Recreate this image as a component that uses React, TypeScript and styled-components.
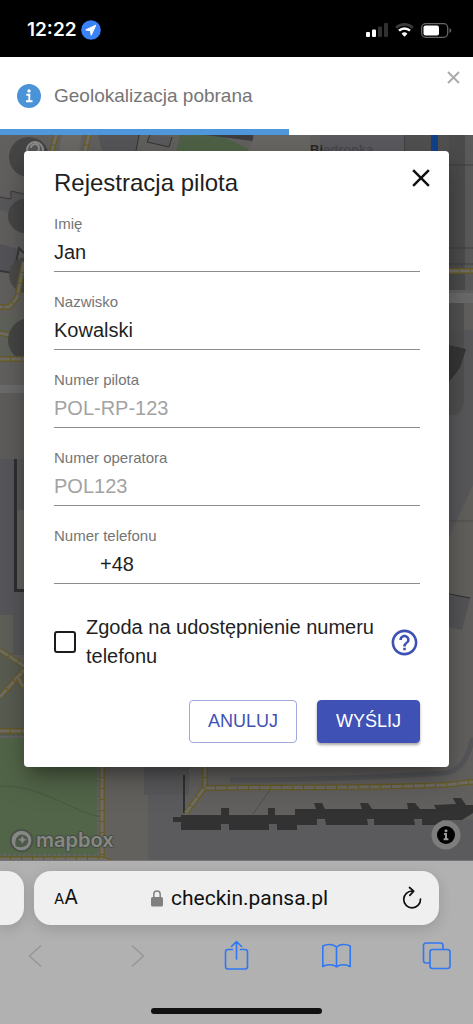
import React from "react";
import styled, { createGlobalStyle } from "styled-components";
import { MdHelpOutline, MdClose } from "react-icons/md";

const sans = `"Liberation Sans", Arial, sans-serif`;
const system = `Inter, "Liberation Sans", sans-serif`;
const indigo = "#3f51b5";

const GlobalStyle = createGlobalStyle`
  *, *::before, *::after { box-sizing: border-box; }
  body { margin: 0; background: #b1b1b1; font-family: ${sans}; color: #1f1f1f; }
  button, input { font: inherit; color: inherit; margin: 0; }
  button { padding: 0; border: 0; background: none; cursor: pointer; }
  svg { display: block; }
`;

const Page = styled.div`
  display: flex;
  flex-direction: column;
  min-height: 100vh;
`;

const StatusBar = styled.header`
  display: flex;
  align-items: center;
  justify-content: space-between;
  height: 57px;
  padding: 3px 21px 0 27px;
  background: #000;
  color: #fff;
`;

const StatusGroup = styled.div<{ $gap: number }>`
  display: flex;
  align-items: center;
  gap: ${(p) => p.$gap}px;
`;

const Time = styled.span`
  font: 600 19px/24px ${system};
`;

const Toast = styled.section`
  display: flex;
  flex-direction: column;
  height: 78px;
  background: #fff;
`;

const ToastBody = styled.div`
  display: flex;
  flex: 1;
  align-items: center;
  gap: 13px;
  padding: 6px 13px 0 17px;
  color: #757575;
`;

const ToastText = styled.p`
  flex: 1;
  margin: 0;
  font-size: 19px;
  line-height: 24px;
`;

const ToastClose = styled.button`
  align-self: flex-start;
  padding-top: 8px;
  color: #ababab;
`;

const Progress = styled.div`
  width: 61%;
  height: 6px;
  background: #4f97da;
`;

const Stage = styled.main`
  position: relative;
  flex: 1;
  padding: 16px 24px 94px;
  overflow: hidden;
  background: #626160;
`;

const MapCanvas = styled.svg`
  position: absolute;
  inset: 0;
  width: 100%;
  height: 100%;
`;

const MapLogo = styled.a`
  position: absolute;
  left: 9px;
  bottom: 7px;
  display: flex;
  align-items: center;
  gap: 2px;
  color: #868884;
  text-decoration: none;
  font: 600 20px/28px ${system};
  text-shadow: 1px 0 1px #444b42, -1px 0 1px #444b42, 0 1px 1px #444b42, 0 -1px 1px #444b42;
`;

const MapInfo = styled.button`
  position: absolute;
  right: 12px;
  bottom: 11px;
`;

const Dialog = styled.form`
  position: relative;
  padding: 16px 29px 24px 30px;
  border-radius: 4px;
  background: #fff;
  box-shadow: 0 11px 15px -7px rgba(0, 0, 0, 0.3), 0 12px 32px rgba(0, 0, 0, 0.25);
`;

const DialogHeader = styled.div`
  display: flex;
  justify-content: space-between;
  align-items: flex-start;
  height: 32px;
  margin-bottom: 16px;
`;

const Title = styled.h1`
  margin: 0;
  font-size: 24px;
  font-weight: 400;
  line-height: 32px;
`;

const DialogClose = styled.button`
  margin: -4px -16px 0 0;
  color: #111;
`;

const Fields = styled.div`
  display: grid;
  gap: 21px;
`;

const Field = styled.div`
  display: grid;
  gap: 3px;
`;

const Label = styled.label`
  font-size: 15px;
  line-height: 18px;
  color: #757575;
`;

const TextInput = styled.input<{ $indent?: boolean }>`
  width: 100%;
  height: 36px;
  padding: 0 0 2px ${(p) => (p.$indent ? 46 : 0)}px;
  border: 0;
  border-bottom: 1px solid #8c8c8c;
  border-radius: 0;
  background: none;
  font-size: 20px;
  outline: none;
  &::placeholder { color: #a3a3a3; opacity: 1; }
`;

const Consent = styled.div`
  display: flex;
  align-items: center;
  margin: 29px 0;
`;

const Checkbox = styled.input`
  appearance: none;
  flex: none;
  width: 22px;
  height: 22px;
  margin-right: 10px;
  border: 2px solid #1c1c1c;
  border-radius: 3px;
  &:checked { background: ${indigo}; }
`;

const ConsentLabel = styled.label`
  flex: 1;
  font-size: 20px;
  line-height: 29px;
`;

const HelpButton = styled.button`
  flex: none;
  color: ${indigo};
`;

const Actions = styled.div`
  display: flex;
  justify-content: flex-end;
  gap: 20px;
`;

const ActionButton = styled.button<{ $primary?: boolean }>`
  height: 43px;
  min-width: 103px;
  padding: 0 18px;
  border: 1px solid ${(p) => (p.$primary ? indigo : "#9fa8da")};
  border-radius: 4px;
  background: ${(p) => (p.$primary ? indigo : "#fff")};
  color: ${(p) => (p.$primary ? "#fff" : indigo)};
  font-size: 18px;
  box-shadow: ${(p) => (p.$primary ? "0 2px 3px rgba(0, 0, 0, 0.35)" : "none")};
`;

const BrowserBar = styled.footer`
  background: #b1b1b1;
  padding-top: 10px;
`;

const AddressRow = styled.div`
  display: flex;
  gap: 10px;
  height: 54px;
  padding-right: 34px;
`;

const NeighbourTab = styled.div`
  width: 24px;
  border-radius: 0 17px 17px 0;
  background: #efefef;
  box-shadow: 0 4px 14px rgba(0, 0, 0, 0.14);
`;

const AddressBar = styled.div`
  display: flex;
  flex: 1;
  align-items: center;
  justify-content: space-between;
  padding: 0 15px 0 19px;
  border-radius: 17px;
  background: #efefef;
  color: #111;
  box-shadow: 0 4px 14px rgba(0, 0, 0, 0.14);
`;

const TextSizeButton = styled.button`
  width: 26px;
  font: 400 20px/24px ${system};
  white-space: nowrap;
`;

const SmallLetter = styled.span`
  font-size: 15px;
`;

const Address = styled.a`
  display: flex;
  align-items: center;
  gap: 8px;
  color: inherit;
  text-decoration: none;
  font: 400 21px/24px Roboto, ${system};
`;

const Toolbar = styled.nav`
  display: flex;
  align-items: center;
  justify-content: space-between;
  height: 62px;
  padding: 0 20px 0 19px;
`;

const ToolButton = styled.button<{ $muted?: boolean }>`
  color: ${(p) => (p.$muted ? "#969696" : "#2f77f3")};
`;

const HomeArea = styled.div`
  display: flex;
  justify-content: center;
  padding: 21px 0 10px;
`;

const HomeIndicator = styled.div`
  width: 36%;
  height: 6px;
  border-radius: 3px;
  background: #111;
`;

const Footpath = ({ d }: { d: string }) => (
  <g fill="none">
    <path d={d} stroke="#665b20" strokeWidth="5.500" />
    <path d={d} stroke="#6f6c67" strokeWidth="3.200" strokeDasharray="10 1" />
  </g>
);

const CityMap = () => (
  <MapCanvas viewBox="0 135 473 726" preserveAspectRatio="xMidYMin slice" aria-hidden="true">
    <rect y="135" width="473" height="726" fill="#62605e" />

    <path d="M98 135h42l-4 16h-34z" fill="#555558" />
    <path d="M139 135l-3 16" stroke="#333" />
    <path d="M150 135l-3 7 22 5 3-10" fill="#5a5a5c" stroke="#333" />
    <path d="M180 135h40l32 16h-76z" fill="#4e6146" />
    <path d="M205 135h48v6z" fill="#3d3d3f" />
    <path d="M255 135h55v16h-62z" fill="#686662" />
    <path d="M320 135h84v16h-84z" fill="#5a5a5e" />
    <text x="310" y="154" fontFamily="Liberation Sans" fontSize="13" fontWeight="700" fill="#2c2725">
      Bi<tspan fill="#48484b">edronka</tspan>
    </text>
    <path d="M404 135h69v20h-69z" fill="#505051" />
    <path d="M404.500 135v16" stroke="#414142" />
    <path d="M431 135h7v16h-7z" fill="#12418a" />
    <Footpath d="M56 135l-4 16" />
    <Footpath d="M89 135l-4 16" />
    <path d="M62 135h20l-3 16h-20z" fill="#6b6965" />

    <path d="M0 197l11 2v-8l13 3v26H0z" fill="#58585b" />
    <path d="M0 197l11 2v-8l13 3" fill="none" stroke="#3a3a3b" />
    <circle cx="29" cy="157" r="20" fill="#454545" />
    <circle cx="35" cy="150" r="8" fill="#555" stroke="#8b8b8b" strokeWidth="2" />
    <path d="M31 148a4 4 0 1 1 5 4" fill="none" stroke="#8b8b8b" strokeWidth="2" />
    <path d="M0 210l24 5v30H0z" fill="#605f5d" />
    <circle cx="25" cy="216" r="17" fill="#464646" />
    <path d="M0 244l19 5-5 24-14-2z" fill="#545458" />
    <path d="M0 271l14 2 5-25 5 5" fill="none" stroke="#373738" strokeWidth="2" />
    <circle cx="27" cy="275" r="18" fill="#4a4a48" />
    <Footpath d="M24 262l-7 36-8 9H0" />
    <path d="M0 313l24 4v45H0z" fill="#5f625a" />
    <Footpath d="M0 333l24 5" />
    <circle cx="30" cy="340" r="22" fill="#454644" />
    <Footpath d="M0 359h24" />
    <path d="M0 385h24v8H0z" fill="#6b6b6b" />
    <path d="M0 393h24v66H0z" fill="#5e5d5b" />
    <path d="M0 459h24v196H0z" fill="#57575b" />
    <path d="M17 510h7v80h-7z" fill="#65635f" />
    <path d="M15.500 459v131.500H24" fill="none" stroke="#303030" strokeWidth="3" />
    <path d="M0 615h13v38H0z" fill="#5f605a" />
    <path d="M0 650l24 16v70H0z" fill="#585c51" />
    <Footpath d="M0 650l24 16" />
    <Footpath d="M0 697l24-27" />
    <Footpath d="M18 678l6 10" />
    <Footpath d="M0 731h24" />

    <path d="M449 135h16v155h-16z" fill="#4b4b4b" />
    <path d="M465 135h8v155h-8z" fill="#5a5a5a" />
    <path d="M449 165h24M449 248h24M449 264h24" stroke="#3e3e3e" />
    <Footpath d="M449 271h24" />
    <path d="M449 293h24v10h-24z" fill="#6a6a6a" />
    <path d="M449 330h24v260h-24z" fill="#58585b" />
    <path d="M449 303h15v96q0 12-8 16h-7z" fill="#4b4b4c" opacity=".7" />
    <path d="M449 345l17 4-6 19-11 14z" fill="#363637" />
    <path d="M473 485l-24 52v60h24z" fill="#62605d" />
    <path d="M449 521h24" stroke="#4f4e4c" />
    <path d="M449 595l21 3-8 32-13-3z" fill="#545457" />
    <path d="M449 594l21 4" stroke="#2c2c2c" />

    <path d="M0 738h98v123H0z" fill="#526548" />
    <path d="M0 737h24M98 767v88H0" fill="none" stroke="#646264" strokeWidth="2" strokeDasharray="3 2" />
    <path d="M0 786c45 0 65 23 101 31 22 6 36 9 47 8" fill="none" stroke="#435a43" />
    <path d="M105 767h43v94h-43z" fill="#63615e" />
    <Footpath d="M102 767v91" />
    <Footpath d="M0 859h102l12 4" />
    <path d="M144 767h45v28h-45z" fill="#58585a" />
    <path d="M148 795h36v25h289v41H148z" fill="#5b5b5e" />
    <path d="M230 780c80 0 170-4 215-7 20-3 24-22 28-35" fill="none" stroke="#555659" strokeWidth="5" />
    <path d="M270 790l-17 24" stroke="#4f4e4c" />
    <path d="M184 775v38" stroke="#303030" strokeWidth="2" />
    <Footpath d="M205 767v20l-19 26" />
    <Footpath d="M205 788c90-1 170 0 235-3 14 0 24-3 33-3" />
    <path
      d="M173 817h8v-2h40v-7h8v7h39v-7h7v7h20v-6h21l-2-6h8l3 6h37l-2-6h8l4 6h36l-1-6h8l5 6h16l-2-4 22-1-3-6h8l5 7h7v8l-11 7h-20l-1 5h-19v-6h-8l1 6h-41v-6h-7l1 6h-42l-1-6h-8v6h-20v5h-20v-6h-8v6h-40v-6h-8v6h-40v-8h-8z"
      fill="#323233"
    />
    <path d="M0 860.500h473" stroke="#747474" />
  </MapCanvas>
);

const line = { fill: "none", stroke: "currentColor", strokeLinecap: "round", strokeLinejoin: "round" } as const;

const fields = [
  { id: "imie", label: "Imię", value: "Jan" },
  { id: "nazwisko", label: "Nazwisko", value: "Kowalski" },
  { id: "pilot", label: "Numer pilota", placeholder: "POL-RP-123" },
  { id: "operator", label: "Numer operatora", placeholder: "POL123" },
  { id: "telefon", label: "Numer telefonu", value: "+48", indent: true },
];

export default function App() {
  return (
    <Page>
      <GlobalStyle />
      <StatusBar>
        <StatusGroup $gap={4}>
          <Time>12:22</Time>
          <svg width="20" height="20" viewBox="0 0 20 20">
            <circle cx="10" cy="10" r="9.800" fill="#3a82f7" />
            <path d="M14.800 5.200L4.800 9.900l4.600.8.800 4.600z" fill="#fff" stroke="#fff" strokeLinejoin="round" />
          </svg>
        </StatusGroup>
        <StatusGroup $gap={7}>
          <svg width="22" height="14" viewBox="0 0 22 14">
            <rect x="0" y="9" width="4" height="5" rx="1" fill="#fff" />
            <rect x="6" y="6.500" width="4" height="7.500" rx="1" fill="#fff" />
            <rect x="12" y="3.500" width="4" height="10.500" rx="1" fill="#303030" />
            <rect x="18" y="0" width="4" height="14" rx="1" fill="#303030" />
          </svg>
          <svg width="19" height="14" viewBox="0 0 19 14" fill="none">
            <path d="M1.200 4.700a12 12 0 0 1 16.600 0" stroke="#3a3a3a" strokeWidth="2.600" />
            <path d="M4 7.700a8 8 0 0 1 11 0" stroke="#fff" strokeWidth="2.500" />
            <path d="M9.500 13.700L6.600 10.700a4.200 4.200 0 0 1 5.800 0z" fill="#fff" />
          </svg>
          <svg width="31" height="15" viewBox="0 0 31 15">
            <rect x=".7" y=".7" width="26" height="13.600" rx="4" fill="none" stroke="#666" strokeWidth="1.300" />
            <rect x="2.500" y="2.500" width="15.500" height="10" rx="2" fill="#fff" />
            <path d="M28.500 5.200c2.300.8 2.300 3.800 0 4.600z" fill="#666" />
          </svg>
        </StatusGroup>
      </StatusBar>

      <Toast role="status">
        <ToastBody>
          <svg width="24" height="24" viewBox="0 0 24 24">
            <circle cx="12" cy="12" r="12" fill="#4b93d8" />
            <circle cx="12" cy="7" r="1.700" fill="#fff" />
            <path d="M9.300 10.700h3.200M9 17.200h6.500M12.300 9.800v7.400" fill="none" stroke="#fff" strokeWidth="1.900" />
          </svg>
          <ToastText>Geolokalizacja pobrana</ToastText>
          <ToastClose type="button" aria-label="Zamknij powiadomienie">
            <svg width="13" height="13" viewBox="0 0 13 13">
              <path d="M1 1l11 11M12 1L1 12" {...line} strokeLinecap="butt" strokeWidth="2" />
            </svg>
          </ToastClose>
        </ToastBody>
        <Progress />
      </Toast>

      <Stage>
        <CityMap />
        <MapLogo href="#mapbox">
          <svg width="25" height="25" viewBox="0 0 25 25">
            <circle cx="12.500" cy="12.500" r="10.800" fill="#868884" stroke="#4a5147" strokeWidth="2" />
            <path d="M6.800 18.200c-1-4-.5-7.500 1.700-9.800a6.300 6.300 0 0 1 9 8.900c-2.500 2.200-6.500 2.300-10.700.9z" fill="#4f594b" />
            <path d="M13.400 7.500l1.300 3 3 1.300-3 1.300-1.300 3-1.300-3-3-1.300 3-1.300z" fill="#868884" />
          </svg>
          mapbox
        </MapLogo>
        <MapInfo type="button" aria-label="Informacje o mapie">
          <svg width="30" height="30" viewBox="0 0 30 30">
            <circle cx="15" cy="15" r="14.500" fill="#7d7d7d" />
            <circle cx="15" cy="15" r="9" fill="#000" />
            <circle cx="15" cy="10.800" r="1.500" fill="#9a9a9a" />
            <path d="M13 14h3M15 13v6M12.600 19.300h4.800" fill="none" stroke="#9a9a9a" strokeWidth="2" />
          </svg>
        </MapInfo>

        <Dialog aria-labelledby="dialog-title" onSubmit={(e) => e.preventDefault()}>
          <DialogHeader>
            <Title id="dialog-title">Rejestracja pilota</Title>
            <DialogClose type="button" aria-label="Zamknij">
              <MdClose size={30} />
            </DialogClose>
          </DialogHeader>
          <Fields>
            {fields.map((f) => (
              <Field key={f.id}>
                <Label htmlFor={f.id}>{f.label}</Label>
                <TextInput id={f.id} defaultValue={f.value} placeholder={f.placeholder} $indent={f.indent} />
              </Field>
            ))}
          </Fields>
          <Consent>
            <Checkbox type="checkbox" id="zgoda" />
            <ConsentLabel htmlFor="zgoda">Zgoda na udostępnienie numeru telefonu</ConsentLabel>
            <HelpButton type="button" aria-label="Pomoc">
              <MdHelpOutline size={31} />
            </HelpButton>
          </Consent>
          <Actions>
            <ActionButton type="button">ANULUJ</ActionButton>
            <ActionButton type="submit" $primary>WYŚLIJ</ActionButton>
          </Actions>
        </Dialog>
      </Stage>

      <BrowserBar>
        <AddressRow>
          <NeighbourTab />
          <AddressBar>
            <TextSizeButton type="button" aria-label="Rozmiar tekstu">
              <SmallLetter>A</SmallLetter>A
            </TextSizeButton>
            <Address href="#checkin">
              <svg width="12" height="17" viewBox="0 0 12 17">
                <rect x="0" y="7" width="12" height="9.500" rx="1.600" fill="#808080" />
                <path d="M2.800 7.500V4.300a3.200 3.200 0 0 1 6.400 0v3.200" fill="none" stroke="#808080" strokeWidth="1.500" />
              </svg>
              checkin.pansa.pl
            </Address>
            <button type="button" aria-label="Odśwież">
              <svg width="24" height="24" viewBox="0 0 24 24">
                <path d="M12.500 5A8.400 8.400 0 1 0 20.500 13M9.500 1.500L13.700 5.200 9.800 9.300" {...line} strokeWidth="1.700" />
              </svg>
            </button>
          </AddressBar>
        </AddressRow>
        <Toolbar aria-label="Nawigacja">
          <ToolButton type="button" $muted aria-label="Wstecz">
            <svg width="32" height="32" viewBox="0 0 32 32"><path d="M21.500 6L10.500 16l11 10" {...line} strokeWidth="1.600" /></svg>
          </ToolButton>
          <ToolButton type="button" $muted aria-label="Dalej">
            <svg width="32" height="32" viewBox="0 0 32 32"><path d="M12.500 6l11 10-11 10" {...line} strokeWidth="1.600" /></svg>
          </ToolButton>
          <ToolButton type="button" aria-label="Udostępnij">
            <svg width="32" height="32" viewBox="0 0 32 32">
              <path d="M12.500 9.500H8a2.500 2.500 0 0 0-2.500 2.500v14.500A2.500 2.500 0 0 0 8 29h17a2.500 2.500 0 0 0 2.500-2.500V12A2.500 2.500 0 0 0 25 9.500h-4.500M16.500 19V2M11.500 6.500l5-5 5 5" {...line} strokeWidth="1.600" />
            </svg>
          </ToolButton>
          <ToolButton type="button" aria-label="Zakładki">
            <svg width="32" height="32" viewBox="0 0 32 32">
              <path d="M15.500 7C12 3.800 6 3.800 1.800 6V26.500c4-2.500 10.200-2.300 13.700.3 3.500-2.600 9.700-2.800 13.700-.3V6C25 3.800 19 3.800 15.500 7zM15.500 7v19.500" {...line} strokeWidth="1.600" />
            </svg>
          </ToolButton>
          <ToolButton type="button" aria-label="Karty">
            <svg width="32" height="32" viewBox="0 0 32 32">
              <path d="M9 23H5a2.500 2.500 0 0 1-2.500-2.500v-15A2.500 2.500 0 0 1 5 3h14.500A2.500 2.500 0 0 1 22 5.500V9" {...line} strokeWidth="1.600" />
              <rect x="9" y="9.500" width="20" height="19" rx="2.500" {...line} strokeWidth="1.600" />
            </svg>
          </ToolButton>
        </Toolbar>
        <HomeArea>
          <HomeIndicator />
        </HomeArea>
      </BrowserBar>
    </Page>
  );
}
